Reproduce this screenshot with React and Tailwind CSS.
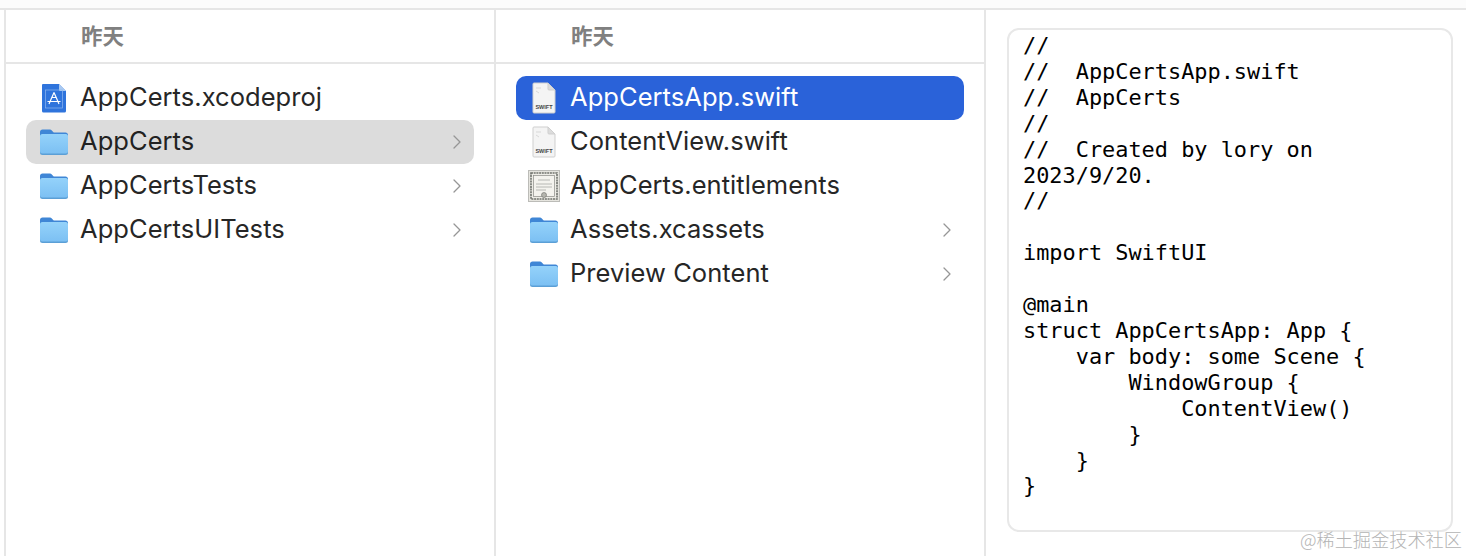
import { ChevronRight } from "lucide-react"

function FolderIcon() {
  return (
    <svg width="30" height="28" viewBox="0 0 30 28" className="shrink-0">
      <defs>
        <linearGradient id="folderBody" x1="0" y1="0" x2="0" y2="1">
          <stop offset="0" stopColor="#94d2fa" />
          <stop offset="1" stopColor="#7cc0f3" />
        </linearGradient>
      </defs>
      <path d="M1 4C1 2.600 2 1.500 3.500 1.500h7c1 0 1.600.3 2.300 1l1.400 1.400c.4.4.8.6 1.400.6H26.500C28 4.500 29 5.500 29 7V12H1z" fill="#3f86d6" />
      <rect x="1" y="6" width="28" height="21" rx="2.500" fill="#5b9fd6" />
      <rect x="1" y="6" width="28" height="19.500" rx="2.500" fill="url(#folderBody)" />
    </svg>
  )
}

function SwiftIcon() {
  return (
    <svg width="26" height="32" viewBox="0 0 26 32" className="shrink-0">
      <path d="M3 1h14l7 7v22a1 1 0 0 1-1 1H3a1 1 0 0 1-1-1V2a1 1 0 0 1 1-1z" fill="#f4f4f4" stroke="#cfcfcf" />
      <path d="M17 1v6a1 1 0 0 0 1 1h6z" fill="#dcdcdc" stroke="#cfcfcf" />
      <path d="M5 6h5M5 9l3 2" stroke="#d8d8d8" fill="none" />
      <text x="13" y="27" textAnchor="middle" fontSize="5.500" fontWeight="700" fill="#444444" fontFamily="Liberation Sans, sans-serif">SWIFT</text>
    </svg>
  )
}

function XcodeIcon() {
  return (
    <svg width="26" height="30" viewBox="0 0 26 30" className="shrink-0">
      <path d="M2 1h16l7 7v20a1.500 1.500 0 0 1-1.500 1.500h-21A1.500 1.500 0 0 1 1 28V2a1 1 0 0 1 1-1z" fill="#2f74dc" />
      <path d="M18 1v6a1 1 0 0 0 1 1h6z" fill="#a9c9f2" />
      <rect x="4.500" y="7" width="17" height="18" fill="none" stroke="#8db7ef" strokeWidth="0.700" />
      <path d="M13 9.500L8 21M13 9.500L18 21M6.500 18.500h13M10.500 14.500l5 0" stroke="#ffffff" strokeWidth="1.200" fill="none" />
    </svg>
  )
}

function CertIcon() {
  return (
    <svg width="32" height="32" viewBox="0 0 32 32" className="shrink-0">
      <rect x="0.500" y="0.500" width="31" height="31" fill="#e6e5df" stroke="#bcbcb8" />
      <rect x="3" y="3" width="26" height="26" fill="#eeede7" stroke="#71736e" strokeWidth="1.600" strokeDasharray="2 0.700" />
      <rect x="5.500" y="5.500" width="21" height="21" fill="#f4f3ee" stroke="#8a8b86" strokeWidth="0.700" />
      <path d="M10 10h12M8 14h16M8 17h16M8 20h10" stroke="#a8a8a4" strokeWidth="0.800" />
      <circle cx="16" cy="25" r="2.500" fill="#b5b5ae" stroke="#6b6b66" strokeWidth="0.600" />
    </svg>
  )
}

function Row({ icon, name, arrow, kind }) {
  const rowStyle =
    kind === "blue"
      ? "bg-[#2a62d9] text-white"
      : kind === "gray"
        ? "bg-[#dcdcdc] text-[#222222]"
        : "text-[#262626]"
  return (
    <div className={"flex h-[44px] items-center rounded-[10px] " + rowStyle}>
      <div className="flex w-[54px] shrink-0 justify-center pl-[2px]">{icon}</div>
      <span className="flex-1 pb-[2px] text-[25.500px] leading-none tracking-[0.05px]">{name}</span>
      {arrow && <ChevronRight size={24} strokeWidth={1.300} className="mb-[1px] mr-[5px] text-[#969696]" />}
    </div>
  )
}

function Column({ children }) {
  return (
    <div className="w-[490px] shrink-0 border-l-2 border-[#e6e6e6]">
      <div className="flex h-[54px] items-center border-b-2 border-[#e6e6e6] pb-[2px] pl-[75px] font-['Noto_Sans_CJK_SC',sans-serif] text-[21.500px] font-semibold text-[#808080]">
        昨天
      </div>
      <div className="mx-5 pt-3">{children}</div>
    </div>
  )
}

const code = `//
//  AppCertsApp.swift
//  AppCerts
//
//  Created by lory on 2023/9/20.
//

import SwiftUI

@main
struct AppCertsApp: App {
    var body: some Scene {
        WindowGroup {
            ContentView()
        }
    }
}`

export default function App() {
  return (
    <div className="relative h-[556px] w-[1466px] overflow-hidden bg-white font-['Inter',sans-serif]">
      <div className="h-[10px] border-b-2 border-[#e6e6e6] bg-[#fcfcfc]" />
      <div className="flex h-[546px] pl-[4px]">
        <Column>
          <Row icon={<XcodeIcon />} name="AppCerts.xcodeproj" />
          <Row icon={<FolderIcon />} name="AppCerts" arrow kind="gray" />
          <Row icon={<FolderIcon />} name="AppCertsTests" arrow />
          <Row icon={<FolderIcon />} name="AppCertsUITests" arrow />
        </Column>
        <Column>
          <Row icon={<SwiftIcon />} name="AppCertsApp.swift" kind="blue" />
          <Row icon={<SwiftIcon />} name="ContentView.swift" />
          <Row icon={<CertIcon />} name="AppCerts.entitlements" />
          <Row icon={<FolderIcon />} name="Assets.xcassets" arrow />
          <Row icon={<FolderIcon />} name="Preview Content" arrow />
        </Column>
        <div className="flex-1 border-l-2 border-[#e6e6e6] pl-[21px] pt-[18px]">
          <pre className="h-[504px] w-[446px] whitespace-pre-wrap rounded-[12px] border-2 border-[#e8e8e8] px-[14px] py-[3px] font-['DejaVu_Sans_Mono',monospace] text-[21.900px] leading-[25.900px] text-black">
            {code}
          </pre>
        </div>
      </div>
      <div className="absolute bottom-[6px] right-[4px] font-['Noto_Sans_CJK_SC',sans-serif] text-[18.200px] font-light leading-[22px] text-[#b4b4b4]">
        @稀土掘金技术社区
      </div>
    </div>
  )
}
